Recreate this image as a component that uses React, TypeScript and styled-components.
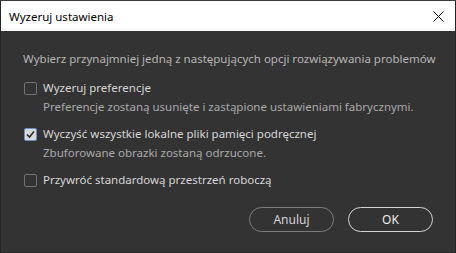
import styled, { createGlobalStyle } from 'styled-components';

const GlobalStyle = createGlobalStyle`
    html, body {
        margin: 0;
        padding: 0;
        background: #2b2b2b;
    }
    * {
        box-sizing: border-box;
    }
`;

const Window = styled.div`
    width: 456px;
    height: 253px;
    display: flex;
    flex-direction: column;
    border: 1px solid #262626;
    border-top-color: #3a3a3a;
    background: #333333;
    font-family: 'Noto Sans', 'Open Sans', sans-serif;
    font-size: 11.5px;
    overflow: hidden;
`;

const TitleBar = styled.div`
    height: 30px;
    flex-shrink: 0;
    display: flex;
    align-items: center;
    justify-content: space-between;
    padding: 0 10px 0 8px;
    background: #ffffff;
    color: #000000;
    font-size: 11.5px;
`;

const CloseButton = styled.div`
    width: 14px;
    height: 14px;
    display: flex;
    align-items: center;
    justify-content: center;
`;

const Body = styled.div`
    flex: 1;
    display: flex;
    flex-direction: column;
    padding: 20px 22px 0 22px;
`;

const Intro = styled.div`
    color: #b5b5b5;
    line-height: 16px;
    white-space: nowrap;
    margin-bottom: 13px;
`;

const Option = styled.div`
    display: flex;
    flex-direction: column;
    margin-bottom: 11px;
`;

const OptionRow = styled.label`
    display: flex;
    align-items: center;
    gap: 6px;
    color: #d6d6d6;
    line-height: 16px;
    white-space: nowrap;
`;

const Box = styled.span<{ $checked?: boolean }>`
    width: 13px;
    height: 13px;
    margin-left: 1px;
    border-radius: 2px;
    border: 1px solid ${(p) => (p.$checked ? '#6f8fc7' : '#727272')};
    background: ${(p) => (p.$checked ? '#d9d9d9' : 'transparent')};
    display: flex;
    align-items: center;
    justify-content: center;
`;

const Description = styled.div`
    color: #a9a9a9;
    line-height: 16px;
    white-space: nowrap;
    padding-left: 20px;
    margin-top: 3px;
`;

const Footer = styled.div`
    display: flex;
    justify-content: flex-end;
    gap: 14px;
    margin-top: 8px;
`;

const Button = styled.div<{ $primary?: boolean }>`
    width: 85px;
    height: 25px;
    border-radius: 13px;
    border: 1px solid ${(p) => (p.$primary ? '#d4d4d4' : '#7c7c7c')};
    color: ${(p) => (p.$primary ? '#ececec' : '#d2d2d2')};
    display: flex;
    align-items: center;
    justify-content: center;
    font-size: 12px;
`;

const options = [
    {
        label: 'Wyzeruj preferencje',
        description: 'Preferencje zostaną usunięte i zastąpione ustawieniami fabrycznymi.',
        checked: false,
    },
    {
        label: 'Wyczyść wszystkie lokalne pliki pamięci podręcznej',
        description: 'Zbuforowane obrazki zostaną odrzucone.',
        checked: true,
    },
    {
        label: 'Przywróć standardową przestrzeń roboczą',
        checked: false,
    },
];

export default function App() {
    return (
        <>
            <GlobalStyle />
            <Window>
                <TitleBar>
                    <span>Wyzeruj ustawienia</span>
                    <CloseButton>
                        <svg width="11" height="11" viewBox="0 0 11 11">
                            <path d="M0.5 0.5 L10.5 10.5 M10.5 0.5 L0.5 10.5" stroke="#111" strokeWidth="1" />
                        </svg>
                    </CloseButton>
                </TitleBar>
                <Body>
                    <Intro>Wybierz przynajmniej jedną z następujących opcji rozwiązywania problemów</Intro>
                    {options.map((o) => (
                        <Option key={o.label}>
                            <OptionRow>
                                <Box $checked={o.checked}>
                                    {o.checked && (
                                        <svg width="9" height="9" viewBox="0 0 9 9">
                                            <path d="M1 4.5 L3.5 7 L8 1.5" fill="none" stroke="#2a2a2a" strokeWidth="1.6" />
                                        </svg>
                                    )}
                                </Box>
                                {o.label}
                            </OptionRow>
                            {o.description && <Description>{o.description}</Description>}
                        </Option>
                    ))}
                    <Footer>
                        <Button>Anuluj</Button>
                        <Button $primary>OK</Button>
                    </Footer>
                </Body>
            </Window>
        </>
    );
}
